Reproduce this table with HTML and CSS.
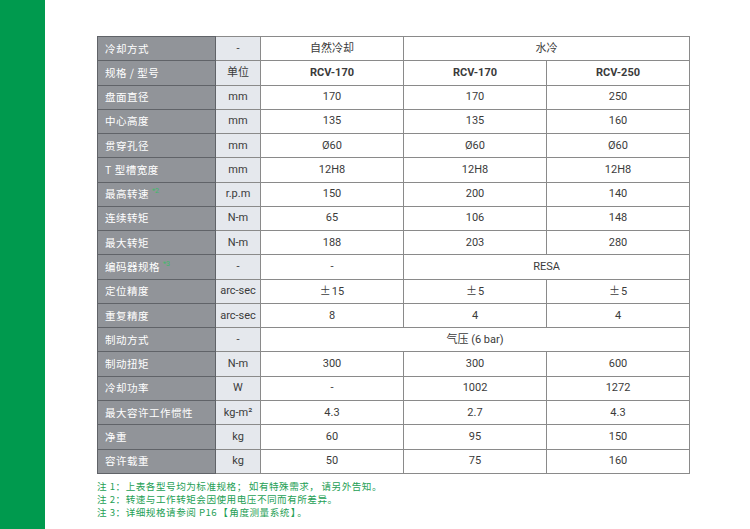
FILE: index.html
```html
<!DOCTYPE html>
<html lang="zh-CN">
<head>
<meta charset="utf-8">
<title>RCV</title>
<link rel="stylesheet" href="styles.css">
</head>
<body>
<div class="page">
  <div class="side"></div>
  <main class="content">
    <table class="spec">
      <colgroup>
        <col class="c-label"><col class="c-unit"><col class="c-d"><col class="c-d"><col class="c-d">
      </colgroup>
      <tbody>
        <tr><th>冷却方式</th><td class="unit">-</td><td>自然冷却</td><td colspan="2">水冷</td></tr>
        <tr><th>规格 / 型号</th><td class="unit">单位</td><td class="b">RCV-170</td><td class="b">RCV-170</td><td class="b">RCV-250</td></tr>
        <tr><th>盘面直径</th><td class="unit">mm</td><td>170</td><td>170</td><td>250</td></tr>
        <tr><th>中心高度</th><td class="unit">mm</td><td>135</td><td>135</td><td>160</td></tr>
        <tr><th>贯穿孔径</th><td class="unit">mm</td><td>Ø60</td><td>Ø60</td><td>Ø60</td></tr>
        <tr><th>T 型槽宽度</th><td class="unit">mm</td><td>12H8</td><td>12H8</td><td>12H8</td></tr>
        <tr><th>最高转速<sup>*2</sup></th><td class="unit">r.p.m</td><td>150</td><td>200</td><td>140</td></tr>
        <tr><th>连续转矩</th><td class="unit">N-m</td><td>65</td><td>106</td><td>148</td></tr>
        <tr><th>最大转矩</th><td class="unit">N-m</td><td>188</td><td>203</td><td>280</td></tr>
        <tr><th>编码器规格<sup>*3</sup></th><td class="unit">-</td><td>-</td><td colspan="2">RESA</td></tr>
        <tr><th>定位精度</th><td class="unit">arc-sec</td><td><span class="pm">±</span>15</td><td><span class="pm">±</span>5</td><td><span class="pm">±</span>5</td></tr>
        <tr><th>重复精度</th><td class="unit">arc-sec</td><td>8</td><td>4</td><td>4</td></tr>
        <tr><th>制动方式</th><td class="unit">-</td><td colspan="3">气压 (6 bar)</td></tr>
        <tr><th>制动扭矩</th><td class="unit">N-m</td><td>300</td><td>300</td><td>600</td></tr>
        <tr><th>冷却功率</th><td class="unit">W</td><td>-</td><td>1002</td><td>1272</td></tr>
        <tr><th>最大容许工作惯性</th><td class="unit">kg-m²</td><td>4.3</td><td>2.7</td><td>4.3</td></tr>
        <tr><th>净重</th><td class="unit">kg</td><td>60</td><td>95</td><td>150</td></tr>
        <tr><th>容许载重</th><td class="unit">kg</td><td>50</td><td>75</td><td>160</td></tr>
      </tbody>
    </table>
    <ul class="notes">
      <li>注 1：上表各型号均为标准规格<span class="p">；</span>如有特殊需求<span class="p">，</span>请另外告知<span class="p">。</span></li>
      <li>注 2：转速与工作转矩会因使用电压不同而有所差异<span class="p">。</span></li>
      <li>注 3：详细规格请参阅 P16<span class="br">【</span>角度测量系统<span class="br">】</span><span class="p">。</span></li>
    </ul>
  </main>
</div>
</body>
</html>
```

FILE: styles.css
```css
html, body {
  margin: 0;
  padding: 0;
  background: #ffffff;
}

.page {
  display: flex;
  width: 750px;
  height: 529px;
  overflow: hidden;
}

.side {
  width: 45px;
  flex: none;
  background: #009a4e;
}

.content {
  padding: 36px 0 0 52px;
  font-family: Roboto, "Noto Sans CJK SC", sans-serif;
}

.spec {
  border-collapse: collapse;
  width: 591px;
  table-layout: fixed;
  font-size: 11px;
  color: #3b3b3b;
}

.c-label { width: 118px; }
.c-unit { width: 45px; }
.c-d { width: 143px; }

.spec tr {
  height: 24.28px;
}

.spec th,
.spec td {
  border: 1px solid #8a8a8a;
  padding: 0;
  text-align: center;
  vertical-align: middle;
  line-height: 14px;
}

.spec th {
  background: #919499;
  color: #ffffff;
  font-weight: normal;
  text-align: left;
  padding-left: 7px;
  border-color: #606368;
  font-family: "Noto Sans CJK SC", sans-serif;
  font-size: 10.5px;
  letter-spacing: 0.5px;
}

.spec th sup {
  color: #3dbb6a;
  font-size: 7px;
  line-height: 0;
  vertical-align: 5px;
  margin-left: 3px;
  letter-spacing: 0;
  font-family: Roboto, sans-serif;
}

.spec td.unit {
  background: #e5e8ed;
  border-left-color: #606368;
}

.spec td.b {
  font-weight: bold;
}

.pm {
  font-family: "Noto Sans CJK TC", sans-serif;
  margin-right: 1px;
}

.notes {
  list-style: none;
  margin: 6px 0 0 0;
  padding: 0;
  color: #25a055;
  font-size: 9.6px;
  line-height: 13px;
  letter-spacing: 0.5px;
  font-family: "Noto Sans CJK TC", sans-serif;
}

.notes .p {
  margin: 0 2px 0 0;
}

.notes .br {
  margin: 0 1px;
}
```
